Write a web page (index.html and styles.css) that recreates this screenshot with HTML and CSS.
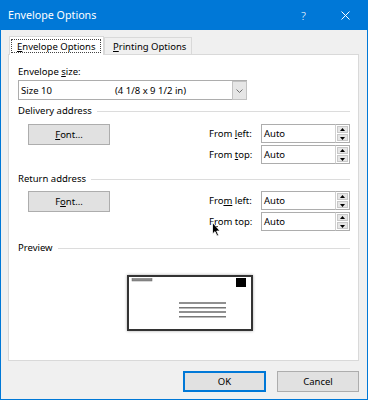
FILE: index.html
```html
<!DOCTYPE html>
<html>
<head>
<meta charset="utf-8">
<link rel="stylesheet" href="styles.css">
</head>
<body>
<div class="window">
  <div class="titlebar">
    <span class="title">Envelope Options</span>
    <span class="help">?</span>
    <svg class="close" width="9" height="9" viewBox="0 0 9 9"><path d="M0.5 0.5 L8.5 8.5 M8.5 0.5 L0.5 8.5" stroke="#fff" stroke-width="1" fill="none"/></svg>
  </div>
  <div class="client">
    <div class="tabs">
      <div class="tab active"><span class="focus"><u>E</u>nvelope Options</span></div>
      <div class="tab"><span><u>P</u>rinting Options</span></div>
    </div>
    <div class="panel">
      <div class="label">Envelope <u>s</u>ize:</div>
      <div class="combo">
        <div class="combo-text"><span class="size-name">Size 10</span><span>(4 1/8 x 9 1/2 in)</span></div>
        <div class="combo-btn"><svg width="7" height="4" viewBox="0 0 7 4"><path d="M0.5 0.5 L3.5 3.5 L6.5 0.5" stroke="#707070" fill="none" stroke-width="1"/></svg></div>
      </div>

      <div class="group-head first"><span>Delivery address</span><span class="rule"></span></div>
      <div class="group-body">
        <button class="btn font-btn"><u>F</u>ont...</button>
        <div class="fields">
          <span class="flabel">From <u>l</u>eft:</span>
          <div class="spinbox"><div class="spin-input">Auto</div><div class="spin-btns"><div class="sbtn"><svg width="5" height="4" viewBox="0 0 5 4"><path d="M2.5 0 L5 3 L0 3 Z" fill="#000"/></svg></div><div class="sbtn"><svg width="5" height="4" viewBox="0 0 5 4"><path d="M0 1 L5 1 L2.5 4 Z" fill="#000"/></svg></div></div></div>
          <span class="flabel">From <u>t</u>op:</span>
          <div class="spinbox"><div class="spin-input">Auto</div><div class="spin-btns"><div class="sbtn"><svg width="5" height="4" viewBox="0 0 5 4"><path d="M2.5 0 L5 3 L0 3 Z" fill="#000"/></svg></div><div class="sbtn"><svg width="5" height="4" viewBox="0 0 5 4"><path d="M0 1 L5 1 L2.5 4 Z" fill="#000"/></svg></div></div></div>
        </div>
      </div>

      <div class="group-head second"><span>Return address</span><span class="rule"></span></div>
      <div class="group-body second-body">
        <button class="btn font-btn">F<u>o</u>nt...</button>
        <div class="fields">
          <span class="flabel">Fro<u>m</u> left:</span>
          <div class="spinbox"><div class="spin-input">Auto</div><div class="spin-btns"><div class="sbtn"><svg width="5" height="4" viewBox="0 0 5 4"><path d="M2.5 0 L5 3 L0 3 Z" fill="#000"/></svg></div><div class="sbtn"><svg width="5" height="4" viewBox="0 0 5 4"><path d="M0 1 L5 1 L2.5 4 Z" fill="#000"/></svg></div></div></div>
          <span class="flabel">F<u>r</u>om top:</span>
          <div class="spinbox"><div class="spin-input">Auto</div><div class="spin-btns"><div class="sbtn"><svg width="5" height="4" viewBox="0 0 5 4"><path d="M2.5 0 L5 3 L0 3 Z" fill="#000"/></svg></div><div class="sbtn"><svg width="5" height="4" viewBox="0 0 5 4"><path d="M0 1 L5 1 L2.5 4 Z" fill="#000"/></svg></div></div></div>
        </div>
      </div>

      <div class="group-head third"><span>Preview</span><span class="rule"></span></div>
      <div class="preview">
        <svg class="envelope" width="126" height="56" viewBox="0 0 126 56">
          <rect x="1" y="1" width="124" height="54" fill="#fff" stroke="#333" stroke-width="2"/>
          <rect x="5" y="3.5" width="20" height="2.5" fill="#8a8a8a" stroke="#666" stroke-width="0.5"/>
          <rect x="109" y="3" width="10" height="9" fill="#000"/>
          <rect x="52" y="27.5" width="47" height="1" fill="#222"/>
          <rect x="52" y="32" width="47" height="1.5" fill="#777"/>
          <rect x="52" y="36.5" width="47" height="1" fill="#222"/>
          <rect x="52" y="41" width="47" height="1.5" fill="#777"/>
        </svg>
      </div>
    </div>
    <div class="footer">
      <button class="btn ok">OK</button>
      <button class="btn">Cancel</button>
    </div>
  </div>
  <svg class="cursor" width="10" height="15" viewBox="0 0 10 15"><path d="M0.5 0.5 L0.5 12 L3 9.6 L5 14 L6.6 13.3 L4.7 9 L8 9 Z" fill="#000" stroke="#fff" stroke-width="0.8"/></svg>
</div>
</body>
</html>
```

FILE: styles.css
```css
* { box-sizing: border-box; }

body {
  margin: 0;
  font-family: "Noto Sans", "Open Sans", sans-serif;
  font-size: 9.5px;
  color: #000;
}

.window {
  position: relative;
  width: 368px;
  height: 400px;
  border: 1px solid #0078d7;
  border-top: 0;
  background: #f0f0f0;
  display: flex;
  flex-direction: column;
}

.titlebar {
  height: 30px;
  flex: none;
  background: #0078d7;
  color: #fff;
  display: flex;
  align-items: center;
  padding-left: 7px;
}

.title {
  flex: 1;
  font-size: 10.7px;
}

.help {
  font-size: 11.5px;
  font-weight: 300;
  margin-right: 35px;
}

.close {
  margin-right: 17px;
}

.client {
  flex: 1;
  display: flex;
  flex-direction: column;
  padding: 6px 8px 0 7px;
}

.tabs {
  display: flex;
  align-items: flex-end;
  height: 18px;
  margin-left: 1px;
  position: relative;
  z-index: 1;
}

.tab {
  height: 17px;
  border: 1px solid #d9d9d9;
  border-bottom: 0;
  background: #f0f0f0;
  display: flex;
  align-items: center;
  padding: 0 0 0 8px;
  width: 88px;
  white-space: nowrap;
}

.tab.active {
  height: 19px;
  margin-bottom: -1px;
  background: #fff;
  width: 95px;
  padding: 0 2px 0 1px;
}

.focus {
  border: 1px dotted #444;
  height: 14px;
  width: 90px;
  display: flex;
  align-items: center;
  padding-left: 5px;
}

.panel {
  height: 307px;
  flex: none;
  background: #fff;
  border: 1px solid #d9d9d9;
  padding: 10px 8px 0 9px;
  display: flex;
  flex-direction: column;
}

.label {
  line-height: 14px;
}

.combo {
  margin-top: 1px;
  width: 229px;
  height: 20px;
  border: 1px solid #adadad;
  display: flex;
}

.combo-text {
  flex: 1;
  display: flex;
  align-items: center;
  padding-left: 2px;
}

.size-name {
  width: 94px;
}

.combo-btn {
  width: 15px;
  margin: 0 -1px -1px 0;
  border: 1px solid #c2c2c2;
  background: #e6e6e6;
  display: flex;
  align-items: center;
  justify-content: center;
}

.group-head {
  display: flex;
  align-items: center;
  gap: 5px;
  line-height: 14px;
}

.group-head.first { margin-top: 4px; }
.group-head.second { margin-top: 8px; }
.group-head.third { margin-top: 10px; }

.rule {
  flex: 1;
  height: 1px;
  background: #dcdcdc;
}

.group-body {
  display: flex;
  justify-content: space-between;
  margin-top: 6px;
}

.second-body { margin-top: 5px; }

.btn {
  font-family: inherit;
  font-size: 9.5px;
  color: #000;
  background: #e1e1e1;
  border: 1px solid #adadad;
  height: 21px;
  padding: 0;
}

.font-btn {
  width: 82px;
  margin-left: 10px;
}

.fields {
  display: grid;
  grid-template-columns: 52px 89px;
  grid-auto-rows: 19px;
  row-gap: 2px;
  align-items: center;
}

.spinbox {
  display: flex;
  height: 19px;
}

.spin-input {
  width: 74px;
  border: 1px solid #adadad;
  border-right: 0;
  padding-left: 2px;
  display: flex;
  align-items: center;
}

.spin-btns {
  width: 15px;
  border: 1px solid #adadad;
  border-left: 1px solid #d0d0d0;
  display: flex;
  flex-direction: column;
  padding: 1px;
  gap: 1px;
}

.sbtn {
  flex: 1;
  background: #e6e6e6;
  border: 1px solid #c8c8c8;
  display: flex;
  align-items: center;
  justify-content: center;
}

.preview {
  margin-top: 20px;
  margin-left: 109px;
}

.envelope {
  display: block;
  filter: drop-shadow(0 0 1.5px rgba(0,0,0,0.35));
}

.footer {
  flex: 1;
  display: flex;
  justify-content: flex-end;
  align-items: flex-start;
  gap: 11px;
  padding-top: 10px;
}

.footer .btn {
  width: 82px;
}

.footer .ok {
  width: 83px;
  border-color: #0078d7;
  box-shadow: inset 0 0 0 1px #0078d7;
}

.cursor {
  position: absolute;
  left: 211px;
  top: 222px;
}
```
